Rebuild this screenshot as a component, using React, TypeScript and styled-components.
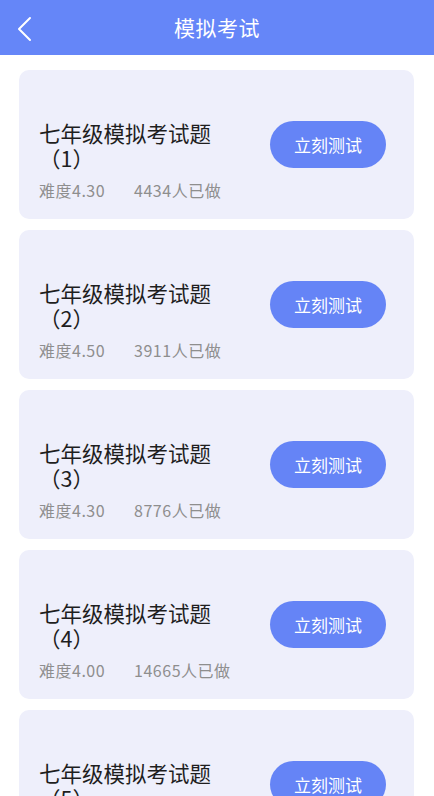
import styled, { createGlobalStyle } from "styled-components";

const GlobalStyle = createGlobalStyle`
  html, body {
    margin: 0;
    padding: 0;
    background: #ffffff;
    font-family: "Noto Sans CJK SC", "Noto Sans", sans-serif;
  }
`;

const exams = [
  { id: 1, level: "4.30", done: 4434 },
  { id: 2, level: "4.50", done: 3911 },
  { id: 3, level: "4.30", done: 8776 },
  { id: 4, level: "4.00", done: 14665 },
  { id: 5, level: "4.20", done: 6021 },
];

const App = () => {
  return (
    <Page>
      <GlobalStyle />
      <Header>
        <BackButton aria-label="返回">
          <svg width="16" height="26" viewBox="0 0 16 26" fill="none">
            <path
              d="M13 2 L2 13 L13 24"
              stroke="#ffffff"
              strokeWidth="2"
              strokeLinecap="round"
              strokeLinejoin="round"
            />
          </svg>
        </BackButton>
        <HeaderTitle>模拟考试</HeaderTitle>
      </Header>
      <List>
        {exams.map((exam) => (
          <Card key={exam.id}>
            <Info>
              <Title>七年级模拟考试题（{exam.id}）</Title>
              <Meta>
                <span>难度{exam.level}</span>
                <span>{exam.done}人已做</span>
              </Meta>
            </Info>
            <StartButton>立刻测试</StartButton>
          </Card>
        ))}
      </List>
    </Page>
  );
};

export default App;

const Page = styled.div`
  width: 434px;
  min-height: 796px;
  background: #ffffff;
`;

const Header = styled.div`
  position: relative;
  height: 55px;
  background-color: #6586f8;
  display: flex;
  align-items: center;
  justify-content: center;
`;

const BackButton = styled.div`
  position: absolute;
  left: 17px;
  top: 16px;
  width: 16px;
  height: 26px;
  display: flex;
`;

const HeaderTitle = styled.div`
  color: #ffffff;
  font-size: 21px;
  line-height: 1;
  letter-spacing: 0.5px;
`;

const List = styled.div`
  display: flex;
  flex-direction: column;
  gap: 11px;
  padding: 15px 20px 15px 19px;
`;

const Card = styled.div`
  display: flex;
  align-items: center;
  justify-content: space-between;
  background-color: #eeeffb;
  border-radius: 10px;
  padding: 0 28px 0 20px;
`;

const Info = styled.div`
  display: flex;
  flex-direction: column;
  padding: 50px 0 19px;
`;

const Title = styled.div`
  max-width: 200px;
  font-size: 21.5px;
  line-height: 25px;
  color: #1e1e1e;
`;

const Meta = styled.div`
  display: flex;
  gap: 29px;
  margin-top: 10px;
  font-size: 16px;
  line-height: 20px;
  letter-spacing: 0.5px;
  color: #8e8e8e;
  white-space: nowrap;
`;

const StartButton = styled.div`
  width: 116px;
  height: 47px;
  border-radius: 24px;
  background-color: #6584f6;
  color: #ffffff;
  font-size: 17px;
  display: flex;
  align-items: center;
  justify-content: center;
  flex-shrink: 0;
`;
